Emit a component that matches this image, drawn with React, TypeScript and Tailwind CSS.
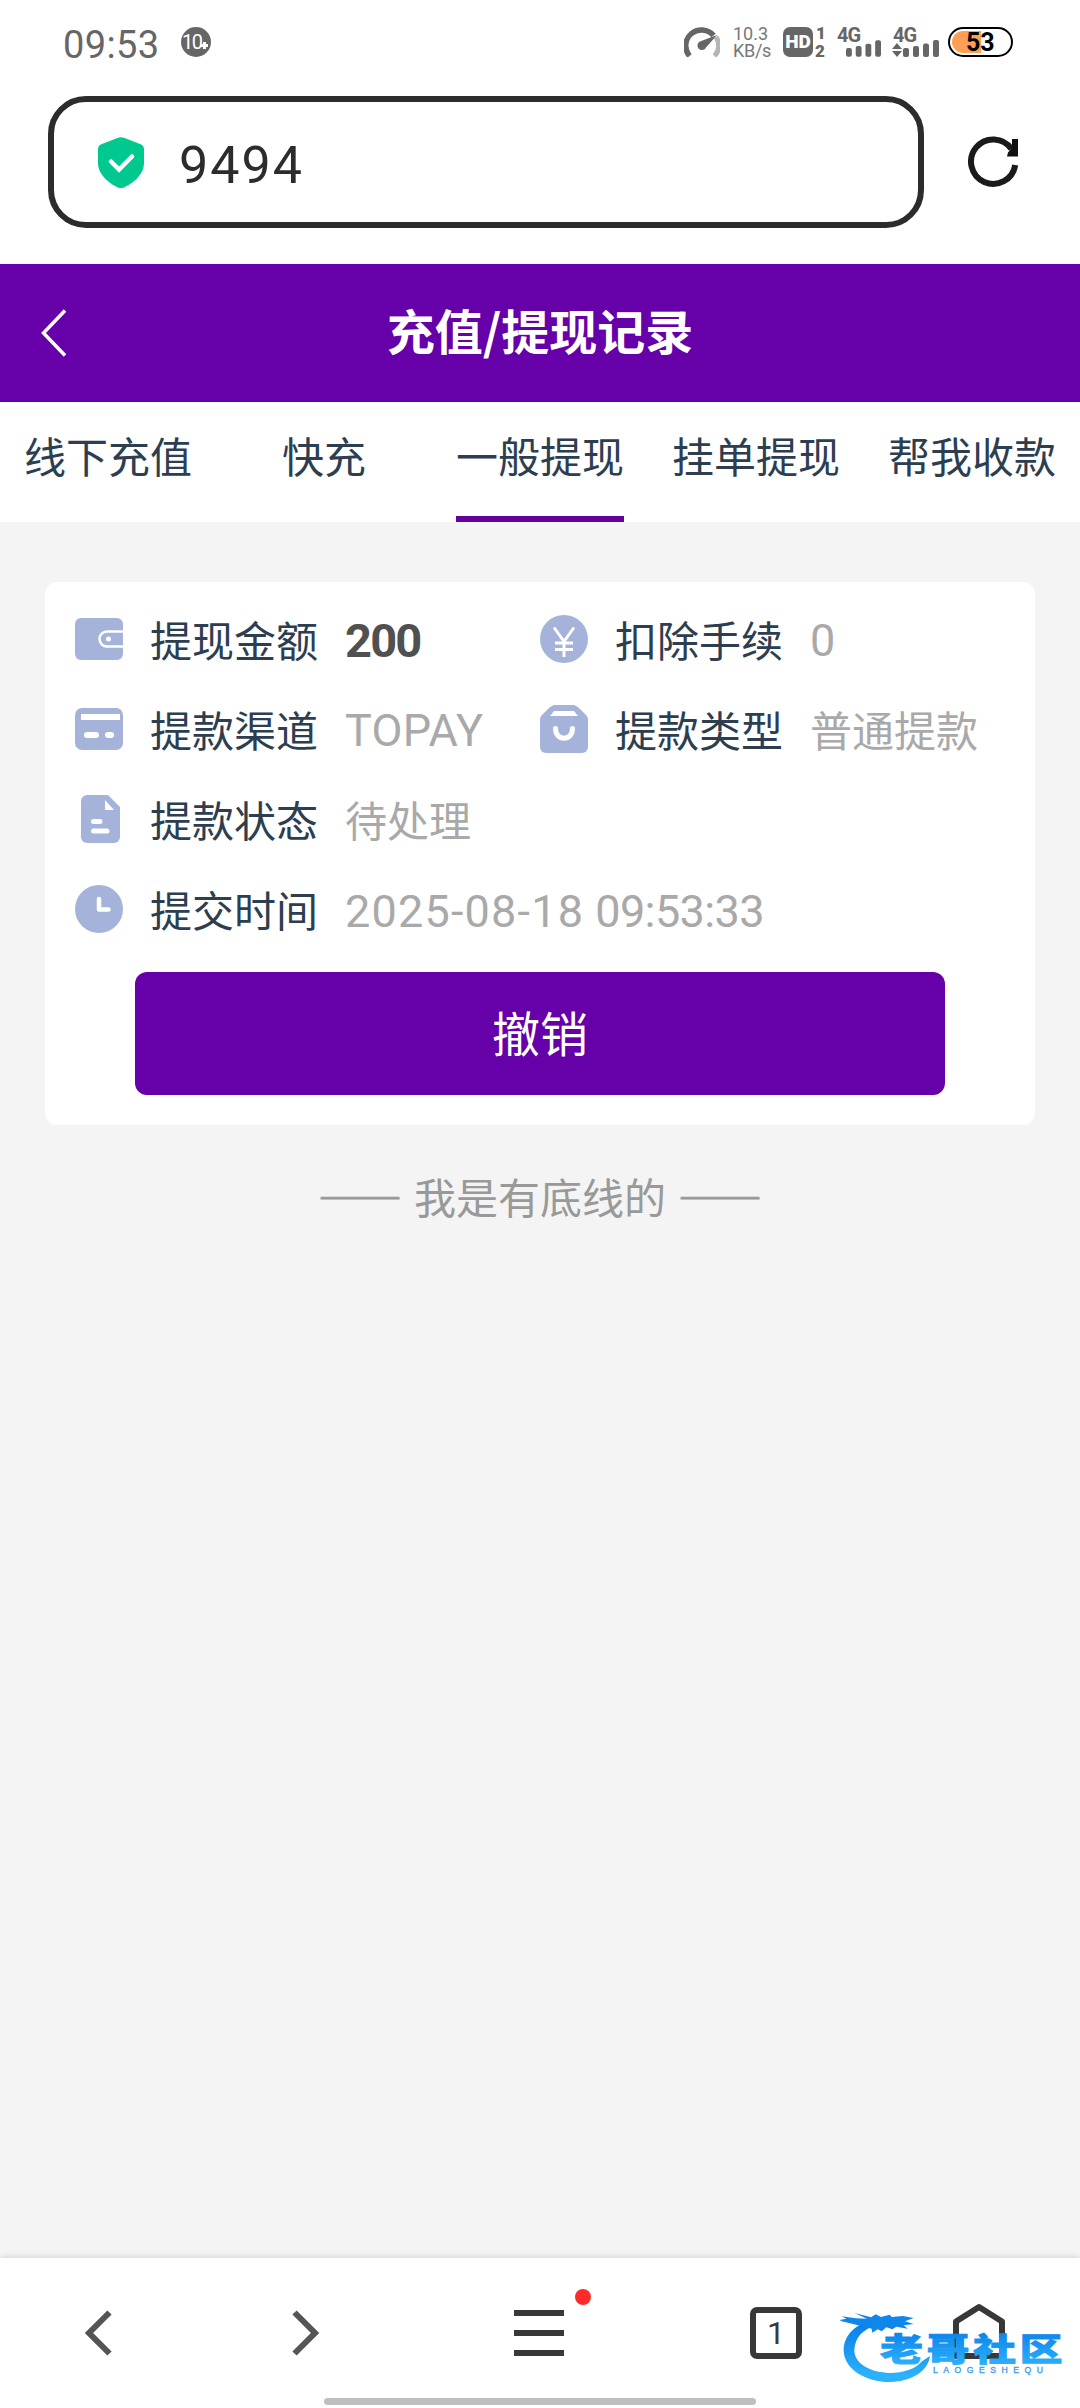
import type { ReactNode } from "react";

interface RowProps {
  icon: ReactNode;
  label: string;
  children: ReactNode;
}

const Row: React.FC<RowProps> = ({ icon, label, children }) => {
  return (
    <div className="flex h-[90px] items-center whitespace-nowrap">
      <div className="w-12 h-12 shrink-0">{icon}</div>
      <p className="ml-[27px] w-[195px] pb-px text-[42px] leading-[60px] text-[#2c3e50]">
        {label}
      </p>
      <div className="pb-px text-[42px] leading-[60px] text-[#a9a9a9]">{children}</div>
    </div>
  );
};

const WalletIcon = () => (
  <svg viewBox="0 0 48 48" className="w-12 h-12">
    <rect y="3" width="48" height="42" rx="6" fill="#a5b3db" />
    <path d="M48 16.500H32a7.500 7.500 0 0 0 0 15h16" fill="none" stroke="#fff" strokeWidth="2.500" />
    <circle cx="33.500" cy="24" r="2.500" fill="#fff" />
  </svg>
);

const CardIcon = () => (
  <svg viewBox="0 0 48 48" className="w-12 h-12">
    <rect y="3" width="48" height="42" rx="7" fill="#a5b3db" />
    <path d="M6 9h39v6H6z" fill="#fff" />
    <path d="M12 30h9M33 30h3" stroke="#fff" strokeWidth="6" strokeLinecap="round" />
  </svg>
);

const FileIcon = () => (
  <svg viewBox="0 0 48 48" className="w-12 h-12">
    <path d="M12 0h21l12 12v30a6 6 0 0 1-6 6H12a6 6 0 0 1-6-6V6a6 6 0 0 1 6-6z" fill="#a5b3db" />
    <path d="M30 5v10h9z" fill="#fff" />
    <path d="M18.500 26.500h6.500M18.500 36h13.500" stroke="#fff" strokeWidth="5" strokeLinecap="round" />
  </svg>
);

const ClockIcon = () => (
  <svg viewBox="0 0 48 48" className="w-12 h-12">
    <circle cx="24" cy="24" r="24" fill="#a5b3db" />
    <path d="M24 14v10.500h9.500" fill="none" stroke="#fff" strokeWidth="4.500" strokeLinecap="round" strokeLinejoin="round" />
  </svg>
);

const YenIcon = () => (
  <svg viewBox="0 0 48 48" className="w-12 h-12">
    <circle cx="24" cy="24" r="24" fill="#a5b3db" />
    <path d="M14 12.500l10 14 10-14M24 26v16M15 28h18M15 34.500h18" fill="none" stroke="#fff" strokeWidth="3" />
  </svg>
);

const BagIcon = () => (
  <svg viewBox="0 0 48 48" className="w-12 h-12">
    <path d="M14 0h20l4 2 9 9 1 3v28a6 6 0 0 1-6 6H6a6 6 0 0 1-6-6V14l1-3 9-9z" fill="#a5b3db" />
    <path d="M14 6h20l4 5H10z" fill="#fff" />
    <path d="M15.500 23.500c0 13 17 13 17 0" fill="none" stroke="#fff" strokeWidth="5" strokeLinecap="round" />
  </svg>
);

const Bars = () => (
  <svg viewBox="0 0 36 17" className="w-9 h-[17px]">
    <g fill="#666">
      <rect y="8" width="6" height="9" rx="2" />
      <rect x="10" y="6" width="6" height="11" rx="2" />
      <rect x="20" y="3.500" width="6" height="13.500" rx="2" />
      <rect x="30" width="6" height="17" rx="2" />
    </g>
  </svg>
);

const StatusBar = () => {
  return (
    <div className="flex h-[84px] items-center pl-[63px] font-['Roboto',sans-serif] text-[#666]">
      <p className="w-[118px] pt-[5px] text-[38px] leading-[44px] tracking-[0.400px]">09:53</p>
      <div className="flex w-[30px] h-[30px] items-center rounded-full bg-[#666] pl-px text-white">
        <span className="text-[20px] tracking-[-1.500px]">10</span>
        <svg viewBox="0 0 7 7" className="mt-[7px] w-[7px] h-[7px]">
          <path d="M3.500 0v7M0 3.500h7" stroke="#fff" strokeWidth="3" />
        </svg>
      </div>

      <svg viewBox="0 0 36 30" className="ml-[473px] w-9 h-[30px]" fill="none">
        <path d="M32 10a15.200 15.200 0 0 1-1.500 19" stroke="#b5b5b5" strokeWidth="5" />
        <path d="M5.500 29A15 15 0 0 1 29.500 8.500" stroke="#666" strokeWidth="5.500" />
        <path d="M33 8L22 20.500a4.500 4.500 0 1 1-6-6z" fill="#666" />
      </svg>
      <div className="ml-[13px] w-[50px] text-[18px] leading-[17px] text-[#777]">
        <p>10.3</p>
        <p className="tracking-[-0.300px]">KB/s</p>
      </div>
      <div className="flex w-[30px] h-[30px] items-center justify-center rounded-[7px] bg-[#666]">
        <span className="text-[19px] font-black text-white">HD</span>
      </div>
      <div className="ml-[2px] flex w-[22px] h-[32px] flex-col justify-between text-[17px] font-black leading-[14px]">
        <span className="pl-px">1</span>
        <span>2</span>
      </div>
      <div className="flex w-[44px] h-[30px] flex-col">
        <span className="h-[13px] text-[20px] font-bold leading-[16px] tracking-[-1px]">4G</span>
        <div className="ml-[9px] flex">
          <Bars />
        </div>
      </div>
      <div className="ml-[11px] flex w-[48px] h-[30px] flex-col">
        <span className="h-[13px] pl-px text-[20px] font-bold leading-[16px] tracking-[-1px]">4G</span>
        <div className="flex gap-px">
          <svg viewBox="0 0 10 17" className="w-[10px] h-[17px]" fill="#666">
            <path d="M5 3l5 6H0zM5 17l5-6H0z" />
          </svg>
          <Bars />
        </div>
      </div>
      <div className="ml-[8px] flex h-[30px] w-[65px] items-center rounded-full border-[2.500px] border-black p-[2px]">
        <div className="flex h-[22px] w-[29px] items-center rounded-l-full bg-[#ff9f55] pl-[14px] pt-px text-[25px] font-bold text-black">
          53
        </div>
      </div>
    </div>
  );
};

const AddressBar = () => {
  return (
    <div className="flex h-[180px] items-start pl-12 pt-3">
      <div className="flex h-[132px] w-[876px] items-center rounded-[38px] border-[6px] border-[#2c2c2c] pl-11">
        <svg viewBox="0 0 46 51" className="h-[51px] w-[46px]">
          <path
            d="M20 .8a8 8 0 0 1 6 0L42 7a5.500 5.500 0 0 1 4 5v14C46 38 34 47 26 50.400a7 7 0 0 1-6 0C12 47 0 38 0 26V12a5.500 5.500 0 0 1 4-5z"
            fill="#00c990"
          />
          <path d="M13 24.500l8 8L34 19.500" fill="none" stroke="#fff" strokeWidth="4.500" strokeLinecap="round" />
        </svg>
        <p className="ml-[35px] pt-[7px] font-['Roboto',sans-serif] text-[52px] leading-[60px] tracking-[2px] text-[#2c2c2c]">
          9494
        </p>
      </div>
      <svg viewBox="0 0 52 52" className="ml-[44px] mt-[40px] w-[52px] h-[52px]">
        <path d="M43.500 13A22.200 22.200 0 1 0 47.200 29" fill="none" stroke="#1a1a1a" strokeWidth="6" />
        <path d="M44 3h6v17.500H39l1-4 4-4.500z" fill="#111" />
      </svg>
    </div>
  );
};

const tabs = ["线下充值", "快充", "一般提现", "挂单提现", "帮我收款"];

const Tabs: React.FC<{ active: number }> = ({ active }) => {
  return (
    <div className="grid h-[120px] grid-cols-5 bg-white">
      {tabs.map((tab, i) => (
        <div key={tab} className="flex flex-col items-center justify-between pt-[23px]">
          <span className="text-[42px] leading-[60px] text-[#2c3e50]">{tab}</span>
          {i === active && <div className="h-[6px] w-[168px] bg-[#66009a]"></div>}
        </div>
      ))}
    </div>
  );
};

const Watermark = () => {
  return (
    <svg viewBox="0 0 735 300" className="absolute left-[835px] top-[32px] h-[100px] w-[245px]">
      <defs>
        <linearGradient id="blue" x1="0" y1="0" x2="0" y2="1">
          <stop offset="0.1" stopColor="#0a80ea" />
          <stop offset="0.9" stopColor="#2cb2fb" />
        </linearGradient>
      </defs>
      <path
        d="M112 90C52 106 26 142 26 182c2 56 66 94 139 94 66-2 114-32 120-78l-24 16c-20 24-56 35-96 35-64-2-107-30-107-69 2-38 26-62 66-74z"
        fill="url(#blue)"
      />
      <path
        d="M20 79l42 6 34 1-18-8-20-9 50 13 14-9 16 8 26-7 6 7 34-3 32 6-26 10 26 8-30 4 12 10-34-6-12 8-18-6-14 12-12-6-16 10-2-12-22-6-34-8-34-8-6-4 20-4z"
        fill="#0f86ec"
      />
      <text
        transform="translate(136 213) scale(1.36 1)"
        fontSize="94"
        fontWeight="900"
        letterSpacing="8.500"
        fill="url(#blue)"
        stroke="url(#blue)"
        strokeWidth="3"
        fontFamily="'Noto Sans CJK SC', sans-serif"
      >
        老哥社区
      </text>
      <text
        x="294"
        y="250"
        fontSize="26"
        textLength="330"
        fill="#3d9be8"
        stroke="#3d9be8"
        strokeWidth="1"
        fontFamily="'Liberation Sans', sans-serif"
      >
        LAOGESHEQU
      </text>
    </svg>
  );
};

const BottomBar = () => {
  return (
    <div className="relative flex h-[150px] flex-col bg-white shadow-[0_-1px_6px_rgba(0,0,0,0.14)]">
      <div className="flex h-[140px] items-start pl-[85px] pt-[45px]">
        <svg viewBox="0 0 27 60" className="h-[60px] w-[27px]" fill="none">
          <path d="M24.500 9.500L4 30l20.500 20.500" stroke="#555" strokeWidth="6" />
        </svg>
        <svg viewBox="0 0 27 60" className="ml-[180px] h-[60px] w-[27px]" fill="none">
          <path d="M2.500 9.500L23 30 2.500 50.500" stroke="#555" strokeWidth="6" />
        </svg>
        <div className="relative ml-[195px] flex h-[60px] w-[50px] flex-col justify-center gap-[14px]">
          <div className="h-[6px] bg-[#383838]"></div>
          <div className="h-[6px] bg-[#383838]"></div>
          <div className="h-[6px] bg-[#383838]"></div>
          <div className="absolute -top-[14px] left-[61px] h-4 w-4 rounded-full bg-[#ff2a2a]"></div>
        </div>
        <div className="ml-[186px] mt-1 flex h-[52px] w-[52px] items-center justify-center rounded-[7px] border-[6px] border-[#383838] font-['Roboto',sans-serif] text-[32px] text-[#383838]">
          1
        </div>
        <svg viewBox="0 0 52 60" className="ml-[151px] h-[60px] w-[52px]" fill="none">
          <path d="M3 18.500L26 4l23 14.500V53H3z" stroke="#383838" strokeWidth="6" strokeLinejoin="round" />
        </svg>
      </div>
      <div className="mx-auto h-[7px] w-[432px] rounded-full bg-[#bfbfbf]"></div>
      <Watermark />
    </div>
  );
};

export default function App() {
  return (
    <div
      lang="zh-CN"
      className="flex h-[2408px] w-[1080px] flex-col overflow-hidden bg-[#f4f4f4] font-['Noto_Sans_CJK_SC',sans-serif]"
    >
      <div className="bg-white">
        <StatusBar />
        <AddressBar />
      </div>

      <div className="grid h-[138px] grid-cols-[1fr_auto_1fr] items-center bg-[#6600a8] text-white">
        <svg viewBox="0 0 26 50" className="ml-[41px] h-[50px] w-[26px]" fill="none">
          <path d="M24 2.500L2.500 25 24 47.500" stroke="#fff" strokeWidth="3.500" />
        </svg>
        <h1 className="pb-[9px] text-[48px] font-bold leading-[70px]">充值/提现记录</h1>
      </div>

      <Tabs active={2} />

      <main className="flex-1 px-[45px] pt-[60px]">
        <div className="h-[543px] rounded-[12px] bg-white px-[30px] pt-[12px]">
          <div className="grid grid-cols-[465px_1fr]">
            <Row icon={<WalletIcon />} label="提现金额">
              <p className="pt-[4px] font-['Roboto'] text-[47px] font-bold tracking-[-1.800px] text-[#505050]">200</p>
            </Row>
            <Row icon={<YenIcon />} label="扣除手续">
              <p className="pt-[4px] font-['Roboto'] text-[45px]">0</p>
            </Row>
            <Row icon={<CardIcon />} label="提款渠道">
              <p className="pt-[4px] font-['Roboto'] text-[45px] tracking-[0.300px]">TOPAY</p>
            </Row>
            <Row icon={<BagIcon />} label="提款类型">
              普通提款
            </Row>
          </div>
          <Row icon={<FileIcon />} label="提款状态">
            待处理
          </Row>
          <Row icon={<ClockIcon />} label="提交时间">
            <div className="flex gap-[11px] pt-[6px] font-['Roboto'] text-[45px]">
              <span className="tracking-[1.200px]">2025-08-18</span>
              <span className="tracking-[-0.600px]">09:53:33</span>
            </div>
          </Row>
          <button className="mx-auto mt-[18px] block h-[123px] w-[810px] rounded-[12px] bg-[#6600a8] pb-[5px] text-[48px] text-white">
            撤销
          </button>
        </div>
        <p className="mt-[41px] text-center text-[42px] leading-[60px] [word-spacing:2.600px] text-[#999]">
          <span className="[-webkit-text-stroke:0.900px_#999]">——</span> 我是有底线的{" "}
          <span className="[-webkit-text-stroke:0.900px_#999]">——</span>
        </p>
      </main>

      <BottomBar />
    </div>
  );
}
